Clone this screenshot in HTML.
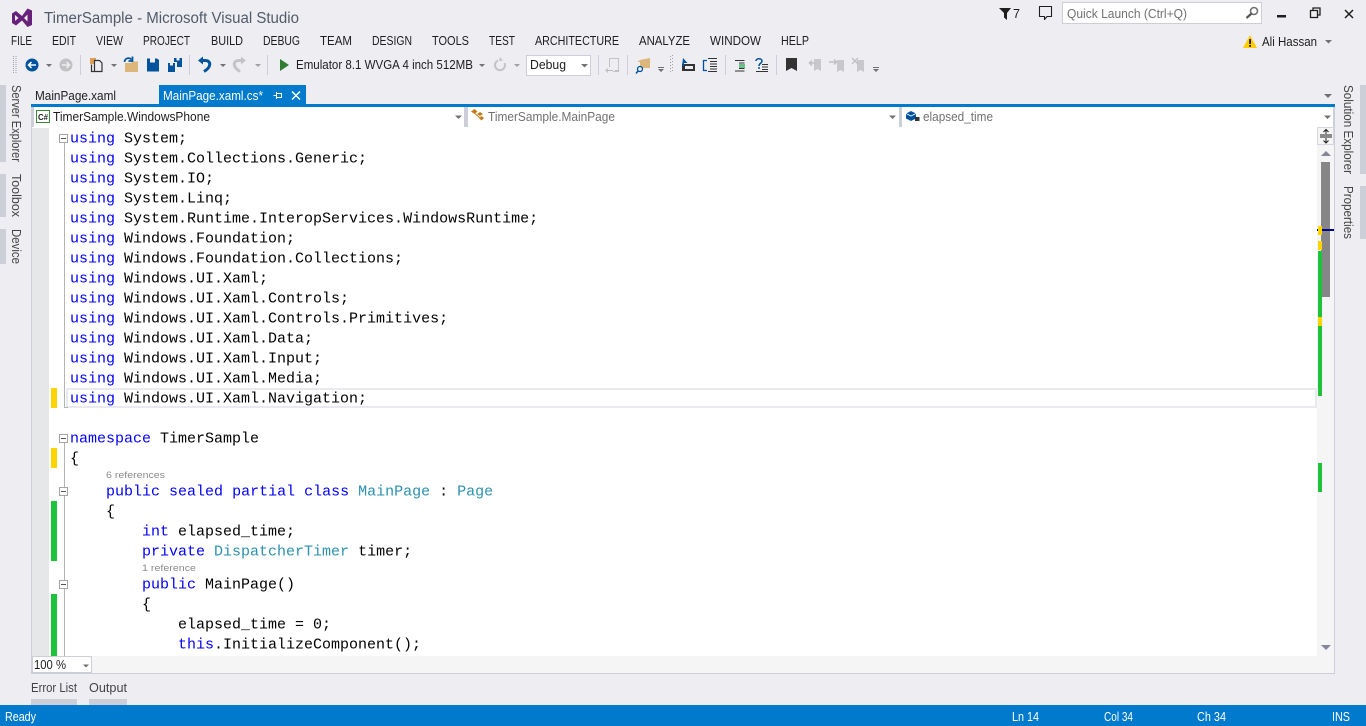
<!DOCTYPE html>
<html><head><meta charset="utf-8"><title>TimerSample - Microsoft Visual Studio</title>
<style>
html,body{margin:0;padding:0;width:1366px;height:726px;overflow:hidden;background:#eeeef2}
svg{display:block}
text{font-family:"Liberation Sans",sans-serif;font-size:12.6px;fill:#1e1e1e;white-space:pre}
.m{font-size:12.6px;fill:#1e1e1e}
.c{font-family:"Liberation Mono",monospace;font-size:15px;fill:#000}
.k{fill:#0000ff}.t{fill:#2b91af}
.r{font-size:9.5px;fill:#8a8a8a}
.g{fill:#717171}
.s{fill:#fff}
</style></head><body>
<svg width="1366" height="726" viewBox="0 0 1366 726" xmlns="http://www.w3.org/2000/svg">
<defs><clipPath id="ed"><rect x="32" y="128" width="1286" height="528"/></clipPath></defs>
<rect width="1366" height="726" fill="#eeeef2"/>

<!-- logo and title -->
<path d="M12 13.500 L16 11 L16 11 L22 16 L27.500 8.500 L32 10.500 V25 L27.500 27 L22 20.500 L16 25.500 L12 23Z M15 15 V21 L18.500 18Z M24 18 L27.500 21.500 V14.500Z" fill="#68217a" fill-rule="evenodd"/>
<text x="44" y="23" style="font-size:15.4px;fill:#515a6a" textLength="255" lengthAdjust="spacingAndGlyphs">TimerSample - Microsoft Visual Studio</text>

<!-- top right -->
<path d="M999 8H1011L1007 13V20L1004 17.500V13Z" fill="#1e1e1e"/>
<text x="1013" y="18" textLength="7" lengthAdjust="spacingAndGlyphs">7</text>
<path d="M1039.500 6.500H1051.500V16.500H1047L1044.500 19.500V16.500H1039.500Z" fill="none" stroke="#1e1e1e" stroke-width="1.100" stroke-linejoin="round"/>
<rect x="1062.500" y="2.500" width="199" height="21" fill="#fff" stroke="#ccced8"/>
<text x="1067" y="18" class="g" textLength="120" lengthAdjust="spacingAndGlyphs">Quick Launch (Ctrl+Q)</text>
<circle cx="1254" cy="11" r="3.500" fill="none" stroke="#717171" stroke-width="1.600"/><path d="M1251.500 13.500L1246.500 18" stroke="#555" stroke-width="2.200"/>
<rect x="1277" y="15" width="9" height="2.500" fill="#1e1e1e"/>
<path d="M1310.500 10.500h7v7h-7z M1313 10.500v-2.500h7v7h-2.500" fill="none" stroke="#1e1e1e" stroke-width="1.300"/>
<path d="M1345 10L1353 18M1353 10L1345 18" stroke="#1e1e1e" stroke-width="1.500"/>
<path d="M1250 35L1257 48H1243Z" fill="#ffcc00"/><rect x="1249.200" y="39" width="1.800" height="5" fill="#1e1e1e"/><rect x="1249.200" y="45" width="1.800" height="1.800" fill="#1e1e1e"/>
<text x="1262" y="46" textLength="55" lengthAdjust="spacingAndGlyphs">Ali Hassan</text>
<path d="M1325 40h7l-3.500 3.500z" fill="#717171"/>

<!-- menu -->
<g class="m">
<text x="11" y="45" textLength="21" lengthAdjust="spacingAndGlyphs">FILE</text>
<text x="52" y="45" textLength="24" lengthAdjust="spacingAndGlyphs">EDIT</text>
<text x="96" y="45" textLength="27" lengthAdjust="spacingAndGlyphs">VIEW</text>
<text x="143" y="45" textLength="47" lengthAdjust="spacingAndGlyphs">PROJECT</text>
<text x="211" y="45" textLength="32" lengthAdjust="spacingAndGlyphs">BUILD</text>
<text x="263" y="45" textLength="37" lengthAdjust="spacingAndGlyphs">DEBUG</text>
<text x="320" y="45" textLength="32" lengthAdjust="spacingAndGlyphs">TEAM</text>
<text x="372" y="45" textLength="40" lengthAdjust="spacingAndGlyphs">DESIGN</text>
<text x="432" y="45" textLength="37" lengthAdjust="spacingAndGlyphs">TOOLS</text>
<text x="489" y="45" textLength="26" lengthAdjust="spacingAndGlyphs">TEST</text>
<text x="535" y="45" textLength="84" lengthAdjust="spacingAndGlyphs">ARCHITECTURE</text>
<text x="639" y="45" textLength="51" lengthAdjust="spacingAndGlyphs">ANALYZE</text>
<text x="710" y="45" textLength="51" lengthAdjust="spacingAndGlyphs">WINDOW</text>
<text x="781" y="45" textLength="28" lengthAdjust="spacingAndGlyphs">HELP</text>
</g>

<!-- toolbar -->
<path d="M13.500 56V73M16 56V73" stroke="#a0a0a8" stroke-width="1" stroke-dasharray="1 1"/>
<circle cx="32" cy="65" r="6.500" fill="#00539c"/><path d="M36 65H29M31.500 62L28.500 65L31.500 68" stroke="#fff" stroke-width="1.500" fill="none"/>
<path d="M46 64h6l-3 3z" fill="#717171"/>
<circle cx="66" cy="65" r="6.500" fill="#c2c2c4"/><path d="M62 65H69M66.500 62L69.500 65L66.500 68" stroke="#eeeef2" stroke-width="1.500" fill="none"/>
<rect x="80" y="55" width="1" height="20" fill="#ccced8"/>
<rect x="90" y="58" width="6" height="6" fill="#d8903c" opacity=".85"/>
<path d="M94.500 60.500h5l2.500 2.500v8.500h-7.500z M91.500 64.500v7h3" fill="#eeeef2" stroke="#333" stroke-width="1.200"/>
<path d="M111 64h6l-3 3z" fill="#717171"/>
<path d="M125 72V63H131L132.500 61.500H138V72H125Z" fill="#dcb67a"/>
<path d="M124.500 62C125 58 129 57 131.500 59.500M132.500 56.500V61H128.500" fill="none" stroke="#00539c" stroke-width="1.700"/>
<path d="M147 58.500H157L159 60V71.500H147Z" fill="#00539c"/><rect x="150" y="58.500" width="5" height="4" fill="#eeeef2"/><rect x="149.500" y="66" width="7" height="5.500" fill="#00539c"/>
<path d="M168 63H175V72H168Z M174 58H182V67H177V62H174Z" fill="#00539c"/><rect x="170" y="63" width="3" height="2.500" fill="#eeeef2"/><rect x="176.500" y="58" width="3" height="2.500" fill="#eeeef2"/>
<rect x="189" y="55" width="1" height="20" fill="#ccced8"/>
<path d="M201 60.500H205C211.500 60.500 211.500 67 204 71.500" fill="none" stroke="#00539c" stroke-width="3"/><path d="M198 60.500L203 56.500V64.500Z" fill="#00539c"/>
<path d="M220 64h6l-3 3z" fill="#717171"/>
<path d="M243 60.500H239C232.500 60.500 232.500 67 240 71.500" fill="none" stroke="#c4c4c6" stroke-width="3"/><path d="M246 60.500L241 56.500V64.500Z" fill="#c4c4c6"/>
<path d="M255 64h6l-3 3z" fill="#a0a0a4"/>
<rect x="267" y="55" width="1" height="20" fill="#ccced8"/>
<path d="M280 59L289 65L280 71Z" fill="#2f7d32"/>
<text x="296" y="69" textLength="177" lengthAdjust="spacingAndGlyphs">Emulator 8.1 WVGA 4 inch 512MB</text>
<path d="M479 64h6l-3 3z" fill="#717171"/>
<path d="M498 60.500A5 5 0 1 0 504.500 63" fill="none" stroke="#c4c4c6" stroke-width="2"/><path d="M500 57L503 60.500L499 61Z" fill="#c4c4c6"/>
<path d="M514 64h6l-3 3z" fill="#a0a0a4"/>
<rect x="526.500" y="55.500" width="64" height="20" fill="#fff" stroke="#ccced8"/>
<text x="530" y="69" textLength="36" lengthAdjust="spacingAndGlyphs">Debug</text>
<path d="M581 64h7l-3.500 3.500z" fill="#717171"/>
<rect x="598" y="55" width="1" height="20" fill="#ccced8"/>
<path d="M609.500 67V58.500H618.500V71.500H613" fill="none" stroke="#c4c4c6"/><path d="M606 70.500H613M615 70.500H619M608 68.500L606 70.500L608 72.500" fill="none" stroke="#bcbcc0"/>
<rect x="627" y="55" width="1" height="20" fill="#ccced8"/>
<path d="M640 60L650 58V68H640Z" fill="#dcb67a"/><path d="M638 61L644 59V62H638Z" fill="#dcb67a"/>
<circle cx="640" cy="69" r="2.500" fill="#eeeef2" stroke="#00539c" stroke-width="1.300"/><path d="M638 71L636 73.500" stroke="#00539c" stroke-width="1.500"/>
<path d="M658 69h6l-3 3z M658 67h6v1h-6z" fill="#717171"/>
<path d="M670.500 56V73M672.500 55V73" stroke="#a0a0a8" stroke-dasharray="1 2"/>
<path d="M682 64H695V71H682Z" fill="#333"/><rect x="685" y="66" width="8" height="3" fill="#eeeef2"/>
<path d="M683 58L687.500 63H684V66H682Z" fill="#00539c"/>
<path d="M707 60.500H703.500V70.500H707" fill="none" stroke="#00539c" stroke-width="1.300"/><path d="M708 58.500H717M710 61.500H717M710 64H717M710 66.500H717M710 69H717M708 71.500H717" stroke="#333"/>
<rect x="725" y="55" width="1" height="20" fill="#ccced8"/>
<path d="M735 60.500H744.500M739 63H744.500M739 68.500H744.500M735 71H744.500" stroke="#333"/><path d="M739 65H745M739 67H745" stroke="#1ea34a" stroke-width="1.200"/>
<path d="M756 61C756 58 762 58 762 61C762 63.500 759 63 759 66" fill="none" stroke="#00539c" stroke-width="1.500"/><rect x="758.300" y="67" width="1.500" height="2" fill="#00539c"/>
<path d="M762 64.500H768M762 67H768M762 69.500H768M756 71.500H768" stroke="#333"/>
<rect x="776" y="55" width="1" height="20" fill="#ccced8"/>
<path d="M786 58H797V71L791.500 68L786 71Z" fill="#333"/>
<path d="M814 59H821V71L817.500 69L814 71Z" fill="#c8c8cc"/><path d="M815 63H810M812 60.500L809.500 63L812 65.500" stroke="#c0c0c4" stroke-width="1.500" fill="none"/>
<path d="M837 60H844V72L840.500 70L837 72Z" fill="#c8c8cc"/><path d="M830 59H837M835 56.500L837.500 59L835 61.500" stroke="#c0c0c4" stroke-width="1.500" fill="none" transform="translate(-1 3)"/>
<path d="M857 60H864V72L860.500 70L857 72Z" fill="#c8c8cc"/><path d="M852 58L858 64M858 58L852 64" stroke="#c0c0c4" stroke-width="1.400"/>
<path d="M873 69h6l-3 3z M873 67h6v1h-6z" fill="#717171"/>

<!-- left rail -->
<rect x="0" y="85" width="6" height="77" fill="#ccced8"/>
<rect x="0" y="174" width="6" height="43" fill="#ccced8"/>
<rect x="0" y="229" width="6" height="35" fill="#ccced8"/>
<text transform="translate(12 85) rotate(90)" style="fill:#444" textLength="77" lengthAdjust="spacingAndGlyphs">Server Explorer</text>
<text transform="translate(12 174) rotate(90)" style="fill:#444" textLength="43" lengthAdjust="spacingAndGlyphs">Toolbox</text>
<text transform="translate(12 229) rotate(90)" style="fill:#444" textLength="35" lengthAdjust="spacingAndGlyphs">Device</text>

<!-- right rail -->
<rect x="1360" y="85" width="6" height="89" fill="#ccced8"/>
<rect x="1360" y="186" width="6" height="53" fill="#ccced8"/>
<text transform="translate(1344 85) rotate(90)" style="fill:#444" textLength="89" lengthAdjust="spacingAndGlyphs">Solution Explorer</text>
<text transform="translate(1344 186) rotate(90)" style="fill:#444" textLength="53" lengthAdjust="spacingAndGlyphs">Properties</text>

<!-- tabs -->
<text x="35" y="100" textLength="81" lengthAdjust="spacingAndGlyphs">MainPage.xaml</text>
<rect x="159" y="85" width="147" height="20" fill="#007acc"/>
<text x="163" y="100" class="s" textLength="100" lengthAdjust="spacingAndGlyphs">MainPage.xaml.cs*</text>
<path d="M273.500 95.500H276M276.500 93.500H281.500V97.500H276.500ZM276.500 92V99M281.500 95.500H281" fill="none" stroke="#fff"/>
<path d="M292 91.500L300 99.500M300 91.500L292 99.500" stroke="#fff" stroke-width="1.500"/>
<path d="M1324 94h8l-4 4z" fill="#717171"/>

<!-- editor frame -->
<rect x="31" y="104" width="1304" height="570" fill="#ccced8"/>
<rect x="31" y="104" width="1304" height="3" fill="#007acc"/>
<rect x="34" y="107" width="430" height="20" fill="#fff"/>
<rect x="468" y="107" width="431" height="20" fill="#fff"/>
<rect x="902" y="107" width="431" height="20" fill="#fff"/>
<rect x="32" y="127" width="1302" height="546" fill="#fff"/>
<rect x="32" y="128" width="17" height="528" fill="#e6e7e8"/>
<rect x="1317" y="128" width="17" height="545" fill="#f5f5f5"/>
<rect x="32" y="656" width="1302" height="17" fill="#f5f5f5"/>

<!-- nav bar -->
<rect x="36.500" y="110.500" width="13" height="12" fill="#fff" stroke="#388a34"/>
<text x="38" y="120" style="font-size:8.500px;font-weight:bold" textLength="10" lengthAdjust="spacingAndGlyphs">C#</text>
<text x="53" y="121" textLength="157" lengthAdjust="spacingAndGlyphs">TimerSample.WindowsPhone</text>
<path d="M455 115.500h7l-3.500 3.500z" fill="#717171"/>
<path d="M471 111.500l3.500-2.500 3 2.500-3 2.500z M477 114l3-2 3 2-3 2z M479 118l2.500-2 2.500 2-2.500 2.500z" fill="#c27d1a"/><path d="M475 113.500L480 118" stroke="#c27d1a"/>
<text x="488" y="121" class="g" textLength="127" lengthAdjust="spacingAndGlyphs">TimerSample.MainPage</text>
<path d="M889 115.500h7l-3.500 3.500z" fill="#717171"/>
<path d="M906 113.500l5-2.500 5 2.500v5l-5 2.500-5-2.500z" fill="#00539c"/><path d="M906 113.500l5 2.500 5-2.500" stroke="#fff" fill="none" stroke-width=".8"/><rect x="915" y="117" width="4.500" height="4" fill="#333"/>
<text x="923" y="121" class="g" textLength="70" lengthAdjust="spacingAndGlyphs">elapsed_time</text>
<path d="M1324 115.500h7l-3.500 3.500z" fill="#717171"/>

<!-- current line -->
<rect x="67" y="389" width="1249" height="18" fill="#fff" stroke="#e9e9f0" stroke-width="2"/>

<!-- change marks -->
<rect x="51" y="388" width="6" height="20" fill="#fdd400"/>
<rect x="51" y="448" width="6" height="20" fill="#fdd400"/>
<rect x="51" y="501" width="6" height="60" fill="#1ec33c"/>
<rect x="51" y="594" width="6" height="62" fill="#1ec33c"/>

<!-- outline -->
<path d="M64.500 143V407.500H68M64.500 443V656" stroke="#b4b4b4" fill="none"/>
<g fill="#fff" stroke="#a5a5a5">
<rect x="59.500" y="134.500" width="8" height="8"/>
<rect x="59.500" y="434.500" width="8" height="8"/>
<rect x="59.500" y="487.500" width="8" height="8"/>
<rect x="59.500" y="580.500" width="8" height="8"/>
</g>
<path d="M61 138.500h5M61 438.500h5M61 491.500h5M61 584.500h5" stroke="#555"/>

<!-- code -->
<g clip-path="url(#ed)">
<text class="c" x="70" y="142.500"><tspan class="k">using</tspan> System;</text>
<text class="c" x="70" y="162.500"><tspan class="k">using</tspan> System.Collections.Generic;</text>
<text class="c" x="70" y="182.500"><tspan class="k">using</tspan> System.IO;</text>
<text class="c" x="70" y="202.500"><tspan class="k">using</tspan> System.Linq;</text>
<text class="c" x="70" y="222.500"><tspan class="k">using</tspan> System.Runtime.InteropServices.WindowsRuntime;</text>
<text class="c" x="70" y="242.500"><tspan class="k">using</tspan> Windows.Foundation;</text>
<text class="c" x="70" y="262.500"><tspan class="k">using</tspan> Windows.Foundation.Collections;</text>
<text class="c" x="70" y="282.500"><tspan class="k">using</tspan> Windows.UI.Xaml;</text>
<text class="c" x="70" y="302.500"><tspan class="k">using</tspan> Windows.UI.Xaml.Controls;</text>
<text class="c" x="70" y="322.500"><tspan class="k">using</tspan> Windows.UI.Xaml.Controls.Primitives;</text>
<text class="c" x="70" y="342.500"><tspan class="k">using</tspan> Windows.UI.Xaml.Data;</text>
<text class="c" x="70" y="362.500"><tspan class="k">using</tspan> Windows.UI.Xaml.Input;</text>
<text class="c" x="70" y="382.500"><tspan class="k">using</tspan> Windows.UI.Xaml.Media;</text>
<text class="c" x="70" y="402.500"><tspan class="k">using</tspan> Windows.UI.Xaml.Navigation;</text>
<text class="c" x="70" y="442.500"><tspan class="k">namespace</tspan> TimerSample</text>
<text class="c" x="70" y="462.500">{</text>
<text class="r" x="106" y="478" textLength="59" lengthAdjust="spacingAndGlyphs">6 references</text>
<text class="c" x="106" y="495.500"><tspan class="k">public</tspan> <tspan class="k">sealed</tspan> <tspan class="k">partial</tspan> <tspan class="k">class</tspan> <tspan class="t">MainPage</tspan> : <tspan class="t">Page</tspan></text>
<text class="c" x="106" y="515.500">{</text>
<text class="c" x="142" y="535.500"><tspan class="k">int</tspan> elapsed_time;</text>
<text class="c" x="142" y="555.500"><tspan class="k">private</tspan> <tspan class="t">DispatcherTimer</tspan> timer;</text>
<text class="r" x="142" y="571" textLength="54" lengthAdjust="spacingAndGlyphs">1 reference</text>
<text class="c" x="142" y="588.500"><tspan class="k">public</tspan> MainPage()</text>
<text class="c" x="142" y="608.500">{</text>
<text class="c" x="178" y="628.500">elapsed_time = 0;</text>
<text class="c" x="178" y="648.500"><tspan class="k">this</tspan>.InitializeComponent();</text>
</g>

<!-- scrollbar -->
<rect x="1317.500" y="127.500" width="16" height="17" fill="#f5f5f5" stroke="#ccced8" stroke-width=".8"/>
<path d="M1320 135H1332M1320 137H1332" stroke="#1e1e1e"/>
<path d="M1326 129.500V134M1323.500 132L1326 129.500L1328.500 132M1326 138V143M1323.500 140.500L1326 143L1328.500 140.500" stroke="#1e1e1e" fill="none"/>
<path d="M1321 156L1326 151L1331 156Z" fill="#868699"/>
<rect x="1321" y="162" width="9" height="135" fill="#868686"/>
<rect x="1317" y="229" width="17" height="2" fill="#00008b"/>
<rect x="1318" y="226" width="4" height="9" fill="#fdd400"/>
<rect x="1318" y="241" width="4" height="9" fill="#fdd400"/>
<rect x="1318" y="251" width="4" height="66" fill="#1ec33c"/>
<rect x="1318" y="317" width="4" height="9" fill="#fdd400"/>
<rect x="1318" y="326" width="4" height="70" fill="#1ec33c"/>
<rect x="1318" y="463" width="4" height="29" fill="#1ec33c"/>
<path d="M1321 645L1331 645L1326 650Z" fill="#868699"/>

<!-- zoom -->
<rect x="32.500" y="656.500" width="59" height="16" fill="#fff" stroke="#ccced8"/>
<text x="34" y="669" textLength="32" lengthAdjust="spacingAndGlyphs">100 %</text>
<path d="M83 664.500h6l-3 3z" fill="#717171"/>

<!-- bottom tabs -->
<text x="31" y="692" class="m" style="fill:#444" textLength="46" lengthAdjust="spacingAndGlyphs">Error List</text>
<text x="89" y="692" class="m" style="fill:#444" textLength="38" lengthAdjust="spacingAndGlyphs">Output</text>
<rect x="31" y="699" width="46" height="6" fill="#ccced8"/>
<rect x="89" y="699" width="38" height="6" fill="#ccced8"/>

<!-- status -->
<rect x="0" y="705" width="1366" height="21" fill="#007acc"/>
<text x="5" y="721" class="s" textLength="31" lengthAdjust="spacingAndGlyphs">Ready</text>
<text x="1012" y="721" class="s" textLength="27" lengthAdjust="spacingAndGlyphs">Ln 14</text>
<text x="1104" y="721" class="s" textLength="29" lengthAdjust="spacingAndGlyphs">Col 34</text>
<text x="1197" y="721" class="s" textLength="29" lengthAdjust="spacingAndGlyphs">Ch 34</text>
<text x="1332" y="721" class="s" textLength="18" lengthAdjust="spacingAndGlyphs">INS</text>
</svg>
</body></html>
